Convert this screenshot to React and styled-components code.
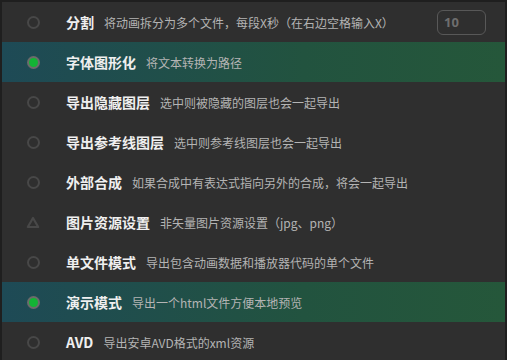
import React from "react";
import styled, { createGlobalStyle } from "styled-components";

const Global = createGlobalStyle`
  html, body { margin: 0; padding: 0; background: #1f1f1f; }
  body { font-family: "Noto Sans CJK SC", "Noto Sans", sans-serif; }
`;

const Panel = styled.div`
  margin: 2px 2px 0 2px;
  width: 503px;
  height: 358px;
  background: #2f2f2f;
  display: flex;
  flex-direction: column;
  overflow: hidden;
`;

const Row = styled.div`
  height: 40px;
  flex: none;
  display: flex;
  align-items: center;
  padding-left: 24px;
  background: ${(p) =>
    p.$active ? "linear-gradient(to right, #1e4a56 0%, #22533f 60%, #25573a 100%)" : "transparent"};
`;

const IconBox = styled.div`
  width: 14px;
  height: 14px;
  display: flex;
  align-items: center;
  justify-content: center;
  margin-right: 26px;
  flex: none;
`;

const Ring = styled.div`
  width: 13px;
  height: 13px;
  box-sizing: border-box;
  border-radius: 50%;
  border: ${(p) => (p.$on ? "2px solid #6b6b6b" : "2.5px solid #484848")};
  background: ${(p) => (p.$on ? "#13b335" : "transparent")};
`;

const Title = styled.span`
  color: #efefef;
  font-size: 14px;
  font-weight: 700;
  margin-right: 10px;
  white-space: nowrap;
`;

const Desc = styled.span`
  color: #b4b4b4;
  font-size: 12px;
  white-space: nowrap;
`;

const NumInput = styled.div`
  margin-left: auto;
  margin-right: 19px;
  width: 49px;
  height: 25px;
  box-sizing: border-box;
  border: 1px solid #585858;
  border-radius: 6px;
  display: flex;
  align-items: center;
  padding-left: 6px;
  color: #6e6e6e;
  font-size: 13px;
  font-weight: 700;
  font-family: "Noto Sans", sans-serif;
`;

const Triangle = () => (
  <svg width="14" height="13" viewBox="0 0 14 13">
    <path d="M7 2 L12.2 11 L1.8 11 Z" fill="none" stroke="#484848" strokeWidth="2.2" strokeLinejoin="round" />
  </svg>
);

const rows = [
  { t: "分割", d: "将动画拆分为多个文件，每段X秒（在右边空格输入X）", input: "10" },
  { t: "字体图形化", d: "将文本转换为路径", on: true },
  { t: "导出隐藏图层", d: "选中则被隐藏的图层也会一起导出" },
  { t: "导出参考线图层", d: "选中则参考线图层也会一起导出" },
  { t: "外部合成", d: "如果合成中有表达式指向另外的合成，将会一起导出" },
  { t: "图片资源设置", d: "非矢量图片资源设置（jpg、png）", tri: true },
  { t: "单文件模式", d: "导出包含动画数据和播放器代码的单个文件" },
  { t: "演示模式", d: "导出一个html文件方便本地预览", on: true },
  { t: "AVD", d: "导出安卓AVD格式的xml资源" },
];

export default function App() {
  return (
    <>
      <Global />
      <Panel>
        {rows.map((r) => (
          <Row key={r.t} $active={r.on}>
            <IconBox>{r.tri ? <Triangle /> : <Ring $on={r.on} />}</IconBox>
            <Title>{r.t}</Title>
            <Desc>{r.d}</Desc>
            {r.input && <NumInput>{r.input}</NumInput>}
          </Row>
        ))}
      </Panel>
    </>
  );
}
